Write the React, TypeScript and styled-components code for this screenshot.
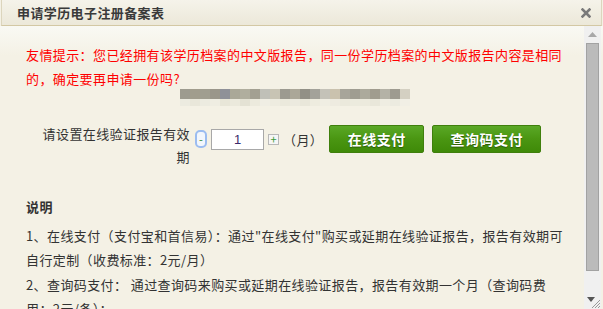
import { createGlobalStyle, styled } from "styled-components";

const GlobalStyle = createGlobalStyle`
  html, body {
    margin: 0;
    padding: 0;
    background: #f4f1e5;
  }
  body {
    font-family: "Noto Sans CJK SC", "Liberation Sans", sans-serif;
    font-size: 13px;
    color: #333;
  }
`;

const Dialog = styled.div`
  width: 603px;
  height: 309px;
  display: flex;
  flex-direction: column;
  overflow: hidden;
  background: #f4f1e5;
`;

const TitleBar = styled.div`
  height: 25px;
  margin: 0 1px;
  padding: 0 10px 0 15px;
  display: flex;
  align-items: center;
  justify-content: space-between;
  background: linear-gradient(#f5f3ea, #ece8d9);
  border: 1px solid #dcd5bd;
  border-top: none;
  border-bottom-color: #d3c8a4;
`;

const Title = styled.h1`
  margin: 0;
  font-size: 13px;
  font-weight: 700;
  letter-spacing: 0.4px;
  color: #3a3a3a;
`;

const Body = styled.div`
  flex: 1;
  display: flex;
  min-height: 0;
  background: linear-gradient(#f9f9f4 0px, #f4f1e5 30px);
`;

const Content = styled.div`
  flex: 1;
  padding: 17px 13px 0 26px;
  overflow: hidden;
  letter-spacing: 0.4px;
`;

const Warning = styled.p`
  margin: 0;
  color: #ff0000;
  line-height: 23.5px;
`;

const Mosaic = styled.div`
  display: grid;
  grid-template-columns: repeat(23, 10px);
  grid-template-rows: 10px 7px;
  margin: -1px 0 0 154px;
`;

const Tile = styled.div<{ $c: string }>`
  background: ${(p) => p.$c};
`;

const PayRow = styled.div`
  display: flex;
  align-items: flex-start;
  margin-top: 16px;
`;

const Label = styled.div`
  width: 150px;
  margin-left: 14px;
  text-align: right;
  line-height: 23px;
`;

const Controls = styled.div`
  height: 28px;
  margin-top: 3px;
  display: flex;
  align-items: center;
`;

const Minus = styled.div`
  width: 8px;
  height: 14px;
  margin-left: 5px;
  border: 2px solid #9bbcf0;
  border-radius: 5px;
  background: #f2f6fc;
  display: flex;
  align-items: center;
  justify-content: center;
  color: #2f8a2f;
  font-size: 11px;
  line-height: 1;
  letter-spacing: 0;
`;

const Count = styled.input`
  box-sizing: border-box;
  width: 53px;
  height: 21px;
  margin-left: 4px;
  border: 1px solid #a8a8a8;
  background: #fff;
  text-align: center;
  font-family: "Liberation Sans", sans-serif;
  font-size: 13px;
  color: #3a2a6a;
  padding: 0;
  outline: none;
`;

const Plus = styled.div`
  box-sizing: border-box;
  width: 11px;
  height: 11px;
  margin-left: 4px;
  border: 1px solid #b8b8b8;
  background: #f6f6f6;
  display: flex;
  align-items: center;
  justify-content: center;
  color: #3b9a3b;
  font-size: 11px;
  line-height: 1;
  letter-spacing: 0;
`;

const Unit = styled.span`
  margin-left: 4px;
  color: #333;
`;

const PayButton = styled.button<{ $w: number; $gap: number }>`
  box-sizing: border-box;
  width: ${(p) => p.$w}px;
  height: 28px;
  margin-left: ${(p) => p.$gap}px;
  border: 1px solid #3f7f0c;
  border-radius: 2px;
  background: linear-gradient(#5aa826, #4a9612 50%, #3f8a08);
  color: #fff;
  font-family: "Noto Sans CJK SC", sans-serif;
  font-size: 14px;
  font-weight: 700;
  letter-spacing: 0.5px;
  text-shadow: 0 1px 1px #2a5a05;
  cursor: pointer;
  padding: 0;
`;

const NoteTitle = styled.div`
  margin-top: 27px;
  font-weight: 700;
  line-height: 24px;
`;

const NoteText = styled.p`
  margin: 5px 0 0;
  line-height: 24.4px;
`;

const Scrollbar = styled.div`
  width: 17px;
  flex-shrink: 0;
  margin-right: 2px;
  background: #f0f0f0;
  display: flex;
  flex-direction: column;
  align-items: center;
`;

const ArrowBox = styled.div`
  height: 17px;
  width: 17px;
  display: flex;
  align-items: center;
  justify-content: center;
`;

const Thumb = styled.div`
  box-sizing: border-box;
  width: 13px;
  height: 228px;
  background: #bbbbbb;
  border: 1px solid #a2a2a2;
`;

const Spacer = styled.div`
  flex: 1;
`;

const mosaicTop = [
  "#9d9b8f", "#a19d8d", "#a09e90", "#9a968a", "#8f9198", "#aaa898", "#b0ae9e", "#a3a092",
  "#c0c0b8", "#c8c4b4", "#9c9a90", "#aba798", "#929086", "#a3a29a", "#c4c2b8", "#cac2ae",
  "#a7a59a", "#9f9d91", "#acaa9c", "#a09c8e", "#b4b2a6", "#9e9b90", "#d4d0c2",
];
const mosaicBottom = [
  "#ecebe0", "#e9e7da", "#ecebe0", "#efede2", "#e8e6d8", "#ebe9dc", "#e4e2d4", "#eceadd",
  "#f0eee4", "#eeece0", "#ebe9dc", "#eceadf", "#e9e7da", "#eeecdf", "#f0eee3", "#eeebe0",
  "#ebe9dc", "#ecebde", "#eceadd", "#e9e7da", "#efede2", "#ecebe0", "#f1efe5",
];

function CloseIcon() {
  return (
    <svg width="10" height="10" viewBox="0 0 10 10">
      <path d="M1.5 1.5 L8.5 8.5 M8.5 1.5 L1.5 8.5" stroke="#7a7a7a" strokeWidth="2.6" strokeLinecap="square" />
    </svg>
  );
}

function App() {
  return (
    <>
      <GlobalStyle />
      <Dialog>
        <TitleBar>
          <Title>申请学历电子注册备案表</Title>
          <CloseIcon />
        </TitleBar>
        <Body>
          <Content>
            <Warning>
              友情提示：您已经拥有该学历档案的中文版报告，同一份学历档案的中文版报告内容是相同的，确定要再申请一份吗?
            </Warning>
            <Mosaic>
              {mosaicTop.map((c, i) => (
                <Tile key={"t" + i} $c={c} />
              ))}
              {mosaicBottom.map((c, i) => (
                <Tile key={"b" + i} $c={c} />
              ))}
            </Mosaic>
            <PayRow>
              <Label>请设置在线验证报告有效期</Label>
              <Controls>
                <Minus>-</Minus>
                <Count defaultValue="1" />
                <Plus>+</Plus>
                <Unit>（月）</Unit>
                <PayButton $w={95} $gap={6}>
                  在线支付
                </PayButton>
                <PayButton $w={109} $gap={8}>
                  查询码支付
                </PayButton>
              </Controls>
            </PayRow>
            <NoteTitle>说明</NoteTitle>
            <NoteText>
              1、在线支付（支付宝和首信易）：通过"在线支付"购买或延期在线验证报告，报告有效期可自行定制（收费标准：2元/月）
              <br />
              2、查询码支付： 通过查询码来购买或延期在线验证报告，报告有效期一个月（查询码费用：2元/条）；
            </NoteText>
          </Content>
          <Scrollbar>
            <ArrowBox>
              <svg width="9" height="5" viewBox="0 0 9 5">
                <path d="M0 5 L4.5 0 L9 5 Z" fill="#a8a8a8" />
              </svg>
            </ArrowBox>
            <Thumb />
            <Spacer />
            <ArrowBox>
              <svg width="17" height="17" viewBox="0 0 17 17">
                <path d="M3 5 L11 5 L7 10 Z" fill="#555" />
                <path d="M16 8 L8 16 M16 11 L11 16 M16 14 L14 16" stroke="#999" strokeWidth="1" />
              </svg>
            </ArrowBox>
          </Scrollbar>
        </Body>
      </Dialog>
    </>
  );
}

export default App;
